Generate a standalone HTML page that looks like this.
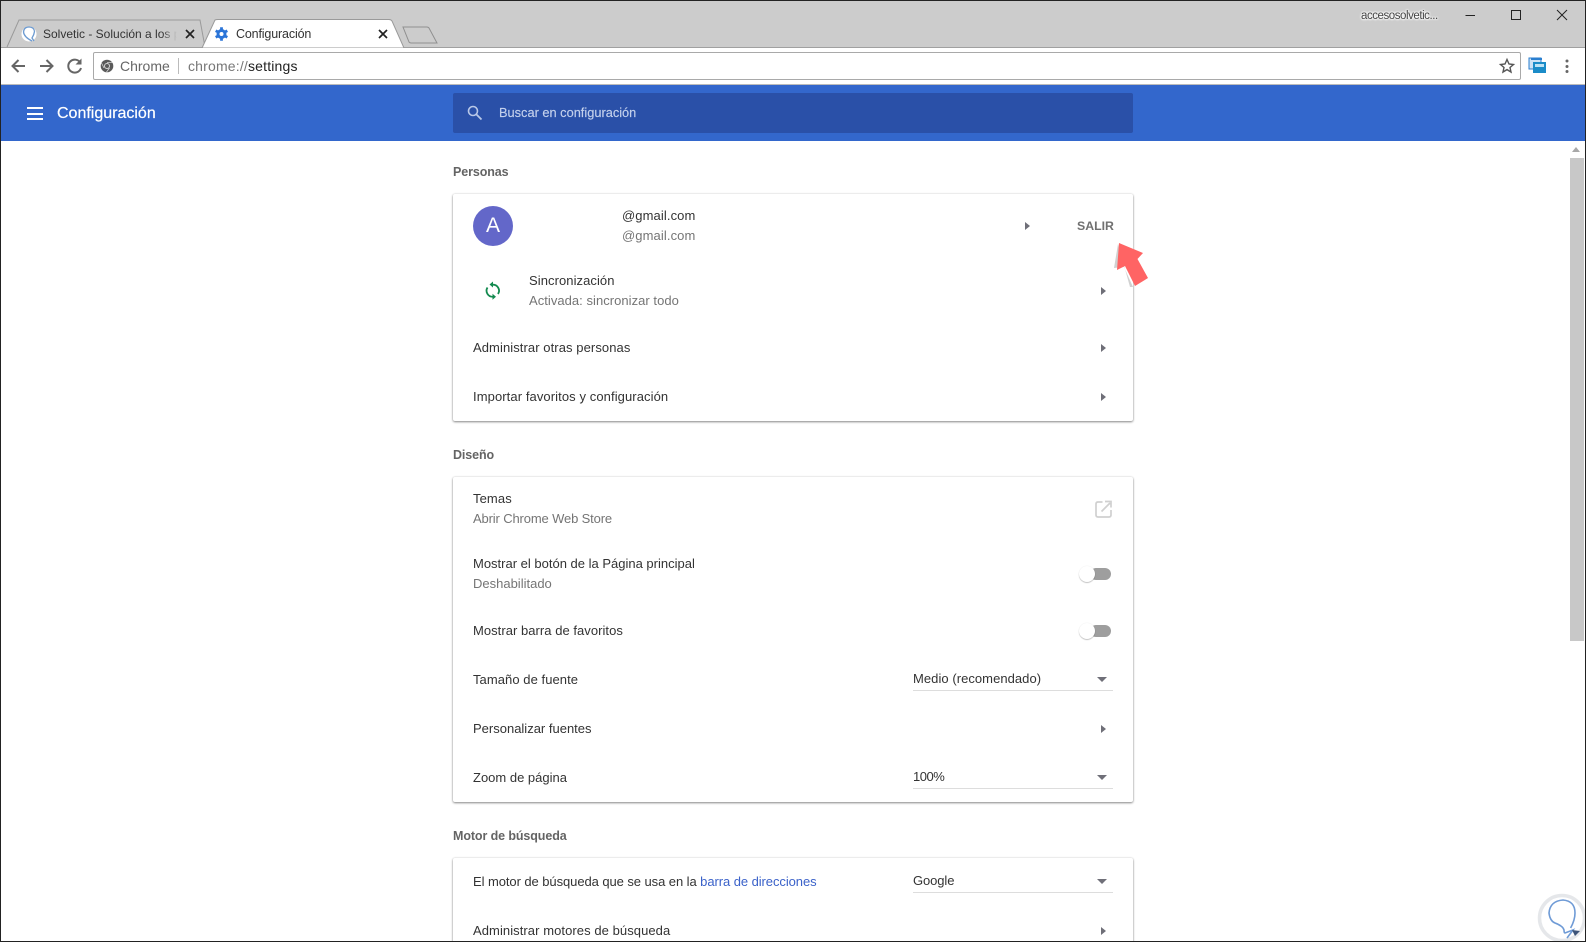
<!DOCTYPE html>
<html lang="es"><head><meta charset="utf-8"><title>Configuración</title>
<style>
html,body{margin:0;padding:0;width:1586px;height:942px;overflow:hidden;background:#fff}
body{position:relative;font-family:"Liberation Sans",sans-serif;font-size:13px;color:#333}
.a{position:absolute}
.t{position:absolute;height:20px;line-height:20px;white-space:nowrap;color:#333}
.s{color:#757575}
.h{font-weight:bold;color:#646464;font-size:12.5px;letter-spacing:-.1px}
.card{position:absolute;left:453px;width:680px;background:#fff;border-radius:2px;box-shadow:0 1px 2px rgba(0,0,0,.45),0 0 2px rgba(0,0,0,.12)}
.ar{position:absolute;width:0;height:0;border-left:5px solid #6f6f78;border-top:4.5px solid transparent;border-bottom:4.5px solid transparent}
.car{position:absolute;width:0;height:0;border-top:5px solid #6f6f78;border-left:5px solid transparent;border-right:5px solid transparent}
.ul{position:absolute;left:913px;width:200px;height:1px;background:#ddd}
.tr{position:absolute;left:1090px;width:21px;height:12px;border-radius:6px;background:#9e9e9e}
.kn{position:absolute;left:1079px;width:16px;height:16px;border-radius:50%;background:#fff;box-shadow:0 1px 1px rgba(0,0,0,.22),0 0 1px rgba(0,0,0,.12)}
svg{position:absolute;overflow:visible}
</style></head><body>

<div class="a" style="left:0;top:0;width:1586px;height:48px;background:#ccc"></div>
<div class="a" style="left:0;top:47px;width:1586px;height:1px;background:#a0a0a0"></div>

<svg style="left:0;top:0" width="1586" height="48">
<path d="M7 47 L19 20 L200 20 L205 47" fill="#ccc" stroke="#9a9a9a"/>
<path d="M202 48 L215 20 Q216 19.500 218 19.500 L389 19.500 Q391 19.500 392 21 L404 48 Z" fill="#fff" stroke="#9a9a9a"/>
<path d="M403 27 L427 27 Q428 27 429 28 L437 43 L411 43 Q410 43 409 42 Z" fill="#ccc" stroke="#8f8f8f"/>
<circle cx="29" cy="34" r="7.500" fill="#fff"/>
<path d="M32 41 Q24 37 23.500 32 Q24 27 29 27 Q34 27 34.500 31.500 Q34 35 32 38 L34 41" fill="none" stroke="#6d9bd1" stroke-width="1.300"/>
<path d="M186 30 L194 38 M194 30 L186 38 M379 30 L387 38 M387 30 L379 38" stroke="#222" stroke-width="1.700" fill="none"/>
<g transform="translate(221.500 34)"><circle r="5" fill="#2a74d8"/><path d="M0 -6.700V6.700M-5.800 -3.300L5.800 3.300M5.800 -3.300L-5.800 3.300" stroke="#2a74d8" stroke-width="2.800"/><circle r="2" fill="#fff"/></g>
<path d="M1465.500 15.500 H1475" stroke="#222" fill="none"/>
<rect x="1511.500" y="10.500" width="9" height="9" fill="none" stroke="#222"/>
<path d="M1557 10 L1567 20 M1567 10 L1557 20" stroke="#222" fill="none"/>
</svg>

<div class="t" style="left:43px;top:24px;width:134px;overflow:hidden;font-size:12px;color:#333">Solvetic - Solución a los p</div>
<div class="a" style="left:162px;top:26px;width:15px;height:16px;background:linear-gradient(90deg,rgba(204,204,204,0),#ccc)"></div>
<div class="t" style="left:236px;top:24px;font-size:12.500px;letter-spacing:-.15px;color:#333">Configuración</div>
<div class="t" style="left:1361px;top:6px;font-size:11.500px;color:#444;text-shadow:0 0 2px #fff,0 0 2px #fff,0 0 2px #fff,0 0 3px #fff;letter-spacing:-.45px">accesosolvetic...</div>

<div class="a" style="left:0;top:48px;width:1586px;height:36px;background:#fff"></div>
<div class="a" style="left:0;top:84px;width:1586px;height:1px;background:#bbb"></div>

<svg style="left:0;top:48px" width="1586" height="36">
<path d="M25 18 H13 M18.500 12 L12.500 18 L18.500 24" stroke="#666" stroke-width="2" fill="none"/>
<path d="M40 18 H52 M46.500 12 L52.500 18 L46.500 24" stroke="#666" stroke-width="2" fill="none"/>
<path d="M80.500 15 A6.500 6.500 0 1 0 81 20" stroke="#666" stroke-width="2" fill="none"/>
<path d="M81.500 10.500 V16.500 H75.500 Z" fill="#666"/>
<circle cx="107" cy="18" r="6.300" fill="#5a5a5a"/><circle cx="107" cy="18" r="2.500" fill="#5a5a5a" stroke="#d5d5d5" stroke-width="1"/><path d="M107 14.500 H112.500 M104 20 L101.500 15 M109.500 20 L106.500 24" stroke="#d5d5d5" stroke-width=".8" fill="none"/>
<path d="M1507 11.500 L1509 16 L1513.500 16.500 L1510 19.500 L1511 24 L1507 21.600 L1503 24 L1504 19.500 L1500.500 16.500 L1505 16 Z" fill="none" stroke="#555" stroke-width="1.400"/>
<rect x="1529" y="10" width="12" height="11" fill="#cde2f5" stroke="#2a7fd0"/>
<rect x="1531" y="10" width="11" height="2" fill="#2a7fd0"/>
<rect x="1533" y="14" width="13" height="11" fill="#1b8cc8"/>
<rect x="1535" y="16" width="9" height="3" fill="#bfe3f5"/>
<circle cx="1567" cy="13" r="1.500" fill="#666"/><circle cx="1567" cy="18.500" r="1.500" fill="#666"/><circle cx="1567" cy="23.500" r="1.500" fill="#666"/>
</svg>

<div class="a" style="left:93px;top:52px;width:1426px;height:26px;border:1px solid #a9a9a9;border-radius:2px;box-sizing:content-box"></div>
<div class="t" style="left:120px;top:56px;font-size:14px;color:#666">Chrome</div>
<div class="a" style="left:178px;top:58px;width:1px;height:16px;background:#bbb"></div>
<div class="t" style="left:188px;top:56px;font-size:14px;letter-spacing:.18px;color:#777">chrome://<span style="color:#222">settings</span></div>

<div class="a" style="left:0;top:85px;width:1586px;height:56px;background:#3367cc"></div>
<div class="a" style="left:27px;top:107px;width:16px;height:2px;background:#fff"></div>
<div class="a" style="left:27px;top:113px;width:16px;height:2px;background:#fff"></div>
<div class="a" style="left:27px;top:118px;width:16px;height:2px;background:#fff"></div>
<div class="t" style="left:57px;top:104px;font-size:16px;color:#fff;-webkit-text-stroke:.2px #fff">Configuración</div>
<div class="a" style="left:453px;top:93px;width:680px;height:40px;background:#2a50a8;border-radius:2px"></div>
<svg style="left:0;top:0" width="600" height="140"><circle cx="473" cy="111" r="4.500" fill="none" stroke="#b9c8e8" stroke-width="1.600"/><path d="M476.500 114.500 L481.500 119.500" stroke="#b9c8e8" stroke-width="1.800"/></svg>
<div class="t" style="left:499px;top:103px;font-size:12.800px;color:#c3d0ec;-webkit-text-stroke:.15px #c3d0ec">Buscar en configuración</div>

<div class="t h" style="left:453px;top:162px">Personas</div>
<div class="card" style="top:194px;height:227px"></div>
<div class="a" style="left:473px;top:206px;width:40px;height:40px;border-radius:50%;background:#6367c9;color:#fff;font-size:21px;line-height:40px;text-align:center">A</div>
<div class="t" style="left:622px;top:206px;letter-spacing:.1px">@gmail.com</div>
<div class="t s" style="left:622px;top:226px;letter-spacing:.1px">@gmail.com</div>
<div class="ar" style="left:1025px;top:222px"></div>
<div class="t" style="left:1077px;top:216px;font-size:12.300px;font-weight:bold;color:#707070">SALIR</div>

<svg style="left:0;top:0" width="1200" height="330">
<path d="M492.500 284.700 A6 6 0 0 1 498 294 M493 296.700 A6 6 0 0 1 487.500 287.500" fill="none" stroke="#138a4f" stroke-width="1.800"/>
<path d="M493 281.500 V287.500 L489.500 284.500 Z M492.500 293.700 V299.700 L496 296.700 Z" fill="#138a4f"/>
</svg>
<div class="t" style="left:529px;top:271px;letter-spacing:.07px">Sincronización</div>
<div class="t s" style="left:529px;top:291px;letter-spacing:.04px">Activada: sincronizar todo</div>
<div class="ar" style="left:1101px;top:287px"></div>
<div class="t" style="left:473px;top:338px;letter-spacing:.08px">Administrar otras personas</div>
<div class="ar" style="left:1101px;top:344px"></div>
<div class="t" style="left:473px;top:387px;letter-spacing:.09px">Importar favoritos y configuración</div>
<div class="ar" style="left:1101px;top:393px"></div>

<svg style="left:0;top:0" width="1200" height="300">
<path d="M1118 244 L1114 268 L1124 267 L1133 287 L1130 287 Z" fill="#999" opacity=".45"/>
<path d="M1119 243 L1143 253 L1137.500 259 L1148 278 L1135 286 L1125 266 L1117 270 Z" fill="#ff6464"/>
</svg>

<div class="t h" style="left:453px;top:445px">Diseño</div>
<div class="card" style="top:477px;height:325px"></div>
<div class="t" style="left:473px;top:489px;letter-spacing:.1px">Temas</div>
<div class="t s" style="left:473px;top:509px;letter-spacing:-.14px">Abrir Chrome Web Store</div>
<svg style="left:0;top:0" width="1200" height="530"><path d="M1102.500 502 H1098 Q1096 502 1096 504 V515 Q1096 517 1098 517 H1109 Q1111 517 1111 515 V510 M1101.500 511.500 L1110 503 M1105 501.500 H1111 V507.500" fill="none" stroke="#d0d0d0" stroke-width="1.700"/></svg>
<div class="t" style="left:473px;top:554px">Mostrar el botón de la Página principal</div>
<div class="t s" style="left:473px;top:574px">Deshabilitado</div>
<div class="tr" style="top:568px"></div><div class="kn" style="top:566px"></div>
<div class="t" style="left:473px;top:621px;letter-spacing:.04px">Mostrar barra de favoritos</div>
<div class="tr" style="top:625px"></div><div class="kn" style="top:623px"></div>
<div class="t" style="left:473px;top:670px;letter-spacing:.06px">Tamaño de fuente</div>
<div class="t" style="left:913px;top:669px;letter-spacing:.05px">Medio (recomendado)</div>
<div class="car" style="left:1097px;top:677px"></div><div class="ul" style="top:690px"></div>
<div class="t" style="left:473px;top:719px">Personalizar fuentes</div>
<div class="ar" style="left:1101px;top:725px"></div>
<div class="t" style="left:473px;top:768px">Zoom de página</div>
<div class="t" style="left:913px;top:767px;letter-spacing:-.5px">100%</div>
<div class="car" style="left:1097px;top:775px"></div><div class="ul" style="top:788px"></div>

<div class="t h" style="left:453px;top:826px">Motor de búsqueda</div>
<div class="card" style="top:858px;height:110px"></div>
<div class="t" style="left:473px;top:872px;letter-spacing:-.07px">El motor de búsqueda que se usa en la <span style="color:#3b62c9">barra de direcciones</span></div>
<div class="t" style="left:913px;top:871px;letter-spacing:-.1px">Google</div>
<div class="car" style="left:1097px;top:879px"></div><div class="ul" style="top:892px"></div>
<div class="t" style="left:473px;top:921px;letter-spacing:.07px">Administrar motores de búsqueda</div>
<div class="ar" style="left:1101px;top:927px"></div>

<svg style="left:0;top:0" width="1586" height="160"><path d="M1576 147 L1580 152 H1572 Z" fill="#a8a8a8"/></svg>
<div class="a" style="left:1570px;top:158px;width:14px;height:483px;background:#c8c8c8"></div>

<svg style="left:0;top:0" width="1586" height="942">
<circle cx="1562" cy="918" r="22.500" fill="#fff" stroke="#e5e7ea" stroke-width="3.500"/>
<path d="M1570.600 928 Q1575 920 1575 913 Q1575 901 1563 900 Q1550 901 1549 913 Q1550 921 1555 923 Q1563 926 1564 930 Q1564 933 1565 933 L1573 930 L1567 938" fill="none" stroke="#6f9bd6" stroke-width="1.600"/>
<path d="M1572 930 L1580 931 L1575 936 Z" fill="#3c5378"/>
</svg>

<div class="a" style="left:0;top:0;width:1586px;height:1px;background:#222"></div>
<div class="a" style="left:0;top:941px;width:1586px;height:1px;background:#222"></div>
<div class="a" style="left:0;top:0;width:1px;height:942px;background:#222"></div>
<div class="a" style="left:1585px;top:0;width:1px;height:942px;background:#222"></div>
</body></html>
